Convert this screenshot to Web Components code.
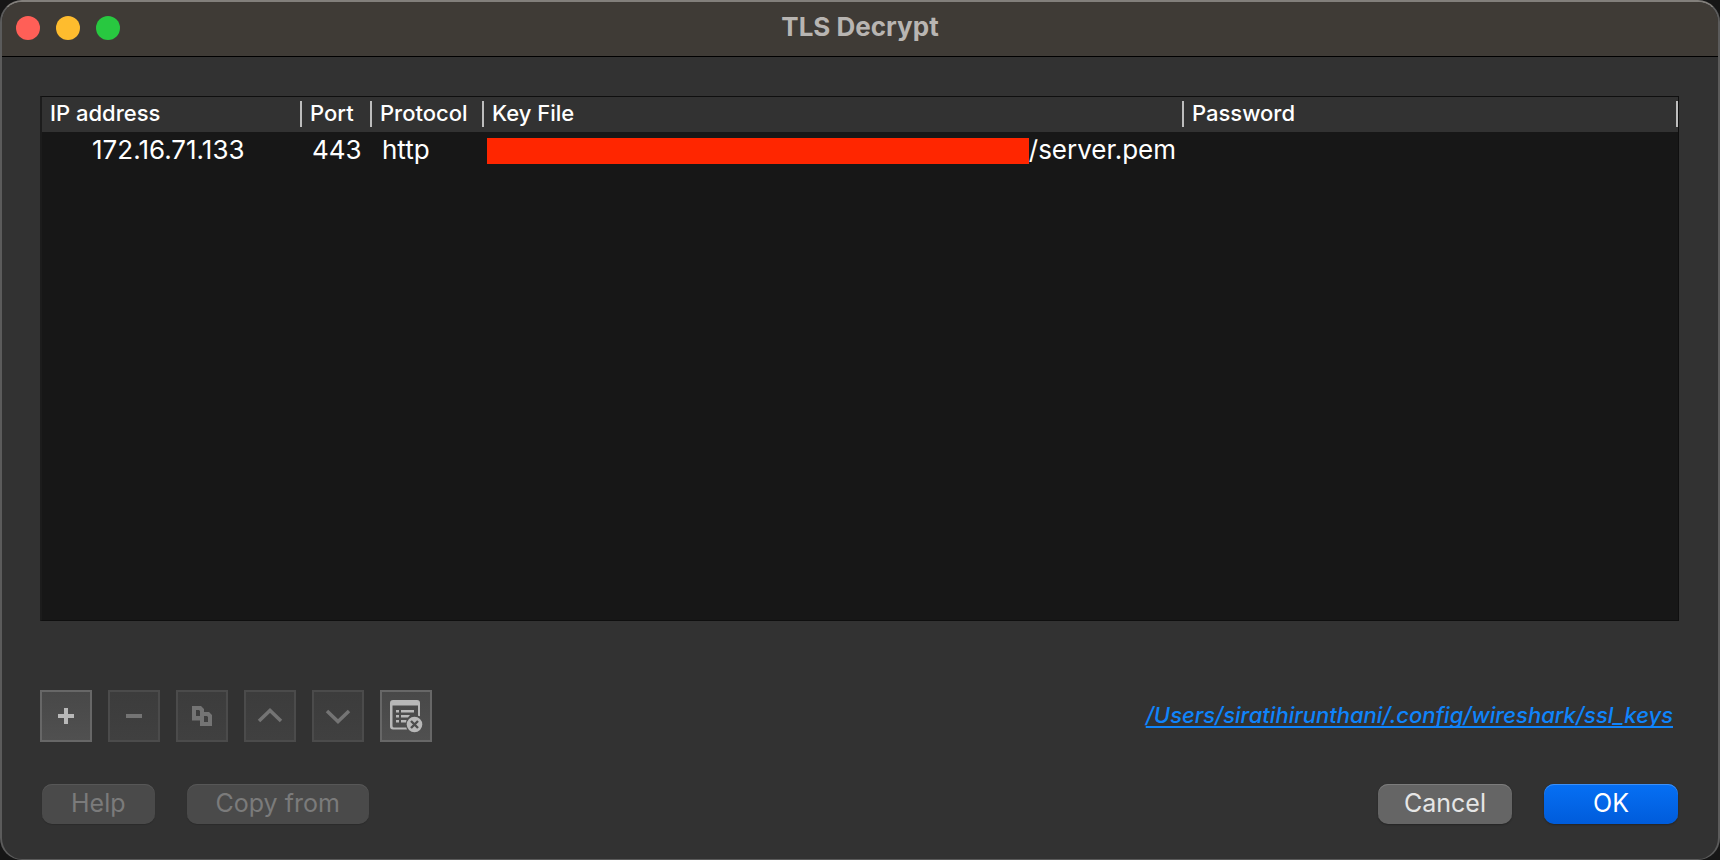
<!DOCTYPE html>
<html lang="en">
<head>
<meta charset="utf-8">
<title>TLS Decrypt</title>
<style>
  body {
    margin: 0;
    background: #161616;
    font-family: Inter, "Liberation Sans", sans-serif;
    color: #fff;
  }
</style>
</head>
<body>

<dialog-window heading="TLS Decrypt">
  <key-table></key-table>
  <tool-bar>
    <tool-button icon="add" label="Add"></tool-button>
    <tool-button icon="remove" label="Remove" disabled></tool-button>
    <tool-button icon="copy" label="Copy" disabled></tool-button>
    <tool-button icon="up" label="Move up" disabled></tool-button>
    <tool-button icon="down" label="Move down" disabled></tool-button>
    <tool-button icon="clear" label="Clear all"></tool-button>
    <path-link slot="end" href="#ssl_keys">/Users/siratihirunthani/.config/wireshark/ssl_keys</path-link>
  </tool-bar>
  <button-row slot="footer">
    <push-button disabled>Help</push-button>
    <push-button disabled>Copy from</push-button>
    <push-button slot="end" kind="wide">Cancel</push-button>
    <push-button slot="end" kind="primary">OK</push-button>
  </button-row>
</dialog-window>

<script>
class DialogWindow extends HTMLElement {
  constructor() {
    super();
    this.attachShadow({mode: 'open'});
    this.shadowRoot.innerHTML = `
      <style>
        :host {
          display: flex;
          flex-direction: column;
          box-sizing: border-box;
          min-height: 100vh;
          border: 2px solid #5b5b5b;
          border-top-color: #827f7b;
          border-bottom-width: 1px;
          border-radius: 22px;
          background: #323232;
          overflow: hidden;
        }
        header {
          display: grid;
          grid-template-columns: 1fr auto 1fr;
          align-items: center;
          height: 55px;
          padding: 0 14px 2px;
          background: #3f3b36;
          border-bottom: 1px solid #000;
          box-sizing: border-box;
        }
        .lights {
          display: flex;
          gap: 16px;
        }
        .lights button {
          width: 24px;
          height: 24px;
          padding: 0;
          border: 0;
          border-radius: 50%;
        }
        .close { background: #ff5f57; }
        .minimize { background: #febc2e; }
        .zoom { background: #28c840; }
        h1 {
          margin: 0;
          font-size: 26px;
          line-height: 30px;
          font-weight: 700;
          color: #b8b5b2;
          padding-bottom: 2px;
        }
        main {
          display: flex;
          flex: 1;
          flex-direction: column;
          padding: 39px 39px 0 38px;
        }
        footer {
          padding: 42px 40px 35px;
        }
      </style>
      <header>
        <div class="lights">
          <button class="close" aria-label="Close"></button>
          <button class="minimize" aria-label="Minimize"></button>
          <button class="zoom" aria-label="Zoom"></button>
        </div>
        <h1></h1>
      </header>
      <main><slot></slot></main>
      <footer><slot name="footer"></slot></footer>
    `;
  }

  connectedCallback() {
    this.shadowRoot.querySelector('h1').textContent = this.getAttribute('heading');
  }
}

class KeyTable extends HTMLElement {
  constructor() {
    super();
    this.attachShadow({mode: 'open'});
    this.shadowRoot.innerHTML = `
      <style>
        :host {
          display: block;
          flex: 1;
          background: #171717;
          border: 1px solid #0f0f0f;
          border-left: 2px solid #1c1c1c;
        }
        table {
          width: 100%;
          table-layout: fixed;
          border-collapse: collapse;
        }
        .ip { width: 260px; }
        .port { width: 70px; }
        .protocol { width: 112px; }
        .file { width: 700px; }
        thead {
          background: #323232;
        }
        th {
          height: 33px;
          padding: 0 0 2px;
          text-align: left;
          font-size: 22px;
          font-weight: 500;
          white-space: nowrap;
        }
        th span {
          display: block;
          line-height: 24px;
          padding: 0 0 2px 8px;
          border-right: 2px solid #bdbdbd;
        }
        td {
          padding: 6px 0 8px;
          font-size: 26px;
          line-height: 24px;
          white-space: nowrap;
        }
        td:nth-child(1) { padding-left: 50px; }
        td:nth-child(2) { padding-left: 10px; }
        td:nth-child(3) { padding-left: 10px; }
        .path {
          display: flex;
          padding: 0 8px 0 3px;
        }
        .redacted {
          flex: 1;
          margin-bottom: -2px;
          background: #ff2600;
        }
      </style>
      <table>
        <colgroup>
          <col class="ip"><col class="port"><col class="protocol"><col class="file"><col>
        </colgroup>
        <thead>
          <tr>
            <th><span>IP address</span></th>
            <th><span>Port</span></th>
            <th><span>Protocol</span></th>
            <th><span>Key File</span></th>
            <th><span>Password</span></th>
          </tr>
        </thead>
        <tbody>
          <tr>
            <td>172.16.71.133</td>
            <td>443</td>
            <td>http</td>
            <td><div class="path"><div class="redacted"></div>/server.pem</div></td>
            <td></td>
          </tr>
        </tbody>
      </table>
    `;
  }
}

class ToolBar extends HTMLElement {
  constructor() {
    super();
    this.attachShadow({mode: 'open'});
    this.shadowRoot.innerHTML = `
      <style>
        :host {
          display: flex;
          align-items: center;
          gap: 16px;
          margin-top: 69px;
        }
        .end {
          margin-left: auto;
          padding: 0 6px 2px 0;
        }
      </style>
      <slot></slot>
      <div class="end"><slot name="end"></slot></div>
    `;
  }
}

const ICONS = {
  add: '<path d="M18 24h6v-6h4v6h6v4h-6v6h-4v-6h-6z"/>',
  remove: '<path d="M18 24h16v4H18z"/>',
  copy: '<path fill-rule="evenodd" d="M16 16h9l3 3v3h5l3 3v11H24v-5.500h-8zM20 20v6h4v-5l-1-1zM28 26v6h4v-5l-1-1z"/>',
  up: '<path d="M15 31 26 20.500 37 31" fill="none" stroke="currentColor" stroke-width="3.500"/>',
  down: '<path d="M15 21 26 31.500 37 21" fill="none" stroke="currentColor" stroke-width="3.500"/>',
  clear: `
    <path fill-rule="evenodd" d="M13 10h24a3 3 0 0 1 3 3v13.300a8.500 8.500 0 0 0-2-.6V15.500H12.500V36a1.500 1.500 0 0 0 1.500 1.500h12.300a9 9 0 0 0 .8 2H13a3 3 0 0 1-3-3V13a3 3 0 0 1 3-3z"/>
    <path d="M16 20h3v2.500h-3zM21 20h13v2.500H21zM16 25h3v2.500h-3zM21 25h9l-2 2.500h-7zM16 30h3v2.500h-3zM21 30h5.500l-.5 2.500h-5z"/>
    <circle cx="34.500" cy="34.500" r="7.800"/>
    <path d="m31 31 7 7m0-7-7 7" stroke="#4d4d4d" stroke-width="2.400"/>`
};

class ToolButton extends HTMLElement {
  constructor() {
    super();
    this.attachShadow({mode: 'open'});
    this.shadowRoot.innerHTML = `
      <style>
        :host { display: block; }
        button {
          display: block;
          box-sizing: border-box;
          width: 52px;
          height: 52px;
          padding: 0;
          border: 2px solid #676767;
          background: linear-gradient(#484848, #505050);
          color: #b8b8b8;
        }
        button:disabled {
          border-color: #4b4b4b;
          background: linear-gradient(#3c3c3c, #404040);
          color: #747474;
        }
        svg {
          display: block;
          width: 52px;
          height: 52px;
          margin: -2px;
          fill: currentColor;
        }
      </style>
      <button><svg viewBox="0 0 52 52" aria-hidden="true"></svg></button>
    `;
  }

  connectedCallback() {
    const button = this.shadowRoot.querySelector('button');
    button.setAttribute('aria-label', this.getAttribute('label'));
    button.disabled = this.hasAttribute('disabled');
    button.querySelector('svg').innerHTML = ICONS[this.getAttribute('icon')];
  }
}

class PathLink extends HTMLElement {
  constructor() {
    super();
    this.attachShadow({mode: 'open'});
    this.shadowRoot.innerHTML = `
      <style>
        :host { display: block; }
        a {
          color: #0f84fb;
          font-size: 22px;
          line-height: 26px;
          font-style: italic;
          font-weight: 500;
          text-decoration: underline;
          text-decoration-thickness: 2px;
          text-decoration-skip-ink: none;
          text-underline-offset: 3px;
        }
      </style>
      <a><slot></slot></a>
    `;
  }

  connectedCallback() {
    this.shadowRoot.querySelector('a').href = this.getAttribute('href');
  }
}

class ButtonRow extends HTMLElement {
  constructor() {
    super();
    this.attachShadow({mode: 'open'});
    this.shadowRoot.innerHTML = `
      <style>
        :host {
          display: flex;
          justify-content: space-between;
        }
        div {
          display: flex;
          gap: 32px;
        }
      </style>
      <div><slot></slot></div>
      <div><slot name="end"></slot></div>
    `;
  }
}

class PushButton extends HTMLElement {
  constructor() {
    super();
    this.attachShadow({mode: 'open'});
    this.shadowRoot.innerHTML = `
      <style>
        :host { display: block; }
        button {
          display: block;
          height: 40px;
          padding: 0 29px 2px;
          border: 0;
          border-radius: 10px;
          background: #656565;
          box-shadow: inset 0 1px #7c7c7c, 0 1px 2px rgba(0, 0, 0, .3);
          color: #e6e6e6;
          font: 400 25px/38px Inter, "Liberation Sans", sans-serif;
        }
        button:disabled {
          background: #4a4a4a;
          box-shadow: inset 0 1px #575757, 0 1px 1px rgba(0, 0, 0, .15);
          color: #7b7b7b;
        }
        :host([kind]) button {
          min-width: 134px;
          padding: 0 16px 2px;
        }
        :host([kind=primary]) button {
          background: linear-gradient(#0670f4, #005cdb);
          box-shadow: inset 0 1px #3c90f8, 0 1px 2px rgba(0, 0, 0, .3);
          color: #fff;
        }
      </style>
      <button><slot></slot></button>
    `;
  }

  connectedCallback() {
    this.shadowRoot.querySelector('button').disabled = this.hasAttribute('disabled');
  }
}

customElements.define('dialog-window', DialogWindow);
customElements.define('key-table', KeyTable);
customElements.define('tool-bar', ToolBar);
customElements.define('tool-button', ToolButton);
customElements.define('path-link', PathLink);
customElements.define('button-row', ButtonRow);
customElements.define('push-button', PushButton);
</script>
</body>
</html>
